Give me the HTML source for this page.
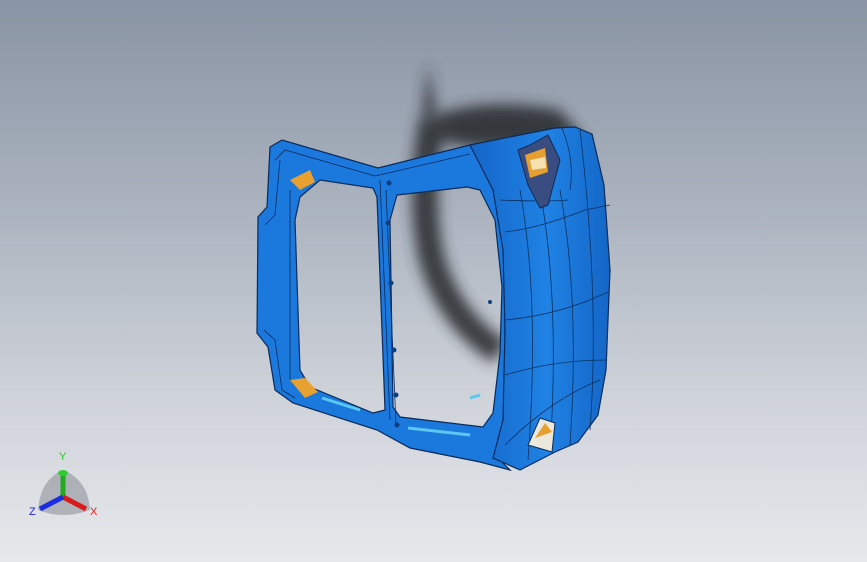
<!DOCTYPE html>
<html><head><style>
html,body{margin:0;padding:0;width:867px;height:562px;overflow:hidden}
body{background:linear-gradient(180deg,#8994a4 0%,#a9b1bd 35%,#ced2d9 70%,#e6e8eb 100%)}
svg{position:absolute;left:0;top:0}
</style></head><body>
<svg width="867" height="562" viewBox="0 0 867 562">
<defs>
<filter id="b" x="-50%" y="-50%" width="200%" height="200%"><feGaussianBlur stdDeviation="7"/></filter>
<linearGradient id="bl" x1="0" x2="1"><stop offset="0" stop-color="#1466c8"/><stop offset="0.55" stop-color="#1f82e4"/><stop offset="1" stop-color="#1466c6"/></linearGradient>
</defs>
<!-- shadow -->
<g filter="url(#b)" opacity="0.9">
<path d="M428 62 L422 120 Q480 95 560 110 L585 140 L520 150 Q470 150 440 140 Z" fill="#2c2e33"/>
<path d="M432 120 Q418 200 432 260 Q450 320 500 352" stroke="#2c2e33" stroke-width="26" fill="none"/>
</g>
<!-- left frame with holes -->
<path fill-rule="evenodd" d="M270 147 L282 140 L378 168 L470 145 L495 190 L505 260 L505 420 L495 455 L510 470 L480 462 L410 448 L377 430 L293 403 L275 390 L268 347 L257 333 L258 217 L267 207 Z
M300 197 L320 180 L373 188 L377 197 L385 410 L373 413 L310 387 L300 370 L295 220 Z
M397 195 L467 187 L480 190 L495 220 L502 287 L500 353 L493 413 L483 427 L400 417 L393 407 L390 220 Z" fill="#1b78dc" stroke="#0a2a5a" stroke-width="1.2"/>
<g stroke="#0a2a5a" stroke-width="0.8" fill="none">
<path d="M275 160 L285 150 L375 176 L470 154"/>
<path d="M265 225 L275 215 L280 160"/><path d="M264 330 L275 340 L282 390 L295 398"/>
<path d="M380 180 L390 420"/><path d="M386 190 L396 425"/>
<path d="M290 190 L290 380"/>
</g>
<g fill="#0d3f80"><circle cx="388" cy="223" r="2.5"/><circle cx="391" cy="283" r="2.5"/><circle cx="394" cy="350" r="2.5"/><circle cx="389" cy="183" r="2.5"/><circle cx="396" cy="395" r="2.5"/><circle cx="397" cy="425" r="2.5"/><circle cx="490" cy="302" r="2"/></g>
<!-- orange bits -->
<path d="M290 180 L310 170 L315 182 L300 190 Z" fill="#e8a030"/>
<path d="M290 380 L305 378 L318 392 L305 398 Z" fill="#e8a030"/>
<path d="M470 398 L480 395" stroke="#5ac8f0" stroke-width="3"/>
<path d="M322 398 L360 410" stroke="#5ac8f0" stroke-width="3"/>
<path d="M408 428 L470 435" stroke="#5ac8f0" stroke-width="3"/>
<!-- bumper -->
<path d="M470 145 L555 128 L575 127 L592 134 L604 185 L610 270 L606 370 L598 415 L578 442 L555 452 L520 470 L493 458 L503 420 L505 330 L503 250 L493 190 Z" fill="url(#bl)" stroke="#0a2a5a" stroke-width="1.2"/>
<g stroke="#0a3060" stroke-width="0.8" fill="none">
<path d="M500 200 Q545 202 568 200"/><path d="M505 232 Q540 228 585 210 L610 205"/><path d="M505 320 Q560 315 608 292"/><path d="M505 375 Q555 360 606 360"/><path d="M505 445 Q550 400 600 380"/>
<path d="M520 190 Q540 300 528 460"/><path d="M540 190 Q560 300 550 452"/><path d="M560 190 Q580 300 570 445"/><path d="M580 130 Q600 300 590 430"/><path d="M562 128 Q575 160 570 190"/>
</g>
<path d="M518 150 L530 145 L548 135 L560 160 L548 205 L540 208 L528 185 Z" fill="#3a4d80" stroke="#0a2a5a"/>
<path d="M525 155 L545 148 L548 172 L530 178 Z" fill="#e6a030"/>
<path d="M530 160 L545 157 L546 168 L532 170 Z" fill="#f4e0b0"/>
<path d="M528 445 L540 418 L555 423 L552 452 Z" fill="#ece8dc" stroke="#0a2a5a"/>
<path d="M535 438 L545 423 L552 432 Z" fill="#e6a030"/>
<!-- triad -->
<path d="M63 470 Q88 480 90 510 Q63 520 38 510 Q40 480 63 470 Z" fill="#7f848b" opacity="0.5"/>
<line x1="63" y1="497" x2="63" y2="475" stroke="#22aa22" stroke-width="5"/>
<ellipse cx="63" cy="473" rx="5" ry="3" fill="#2fcf2f"/>
<line x1="63" y1="497" x2="86" y2="509" stroke="#d61b1b" stroke-width="5"/>
<line x1="63" y1="497" x2="40" y2="509" stroke="#1b2be0" stroke-width="5"/>
<text x="59" y="460" font-family="Liberation Sans,sans-serif" font-size="11" fill="#22cc22">Y</text>
<text x="90" y="515" font-family="Liberation Sans,sans-serif" font-size="11" fill="#e02020">X</text>
<text x="29" y="515" font-family="Liberation Sans,sans-serif" font-size="11" fill="#2020e0">Z</text>
</svg>
</body></html>
